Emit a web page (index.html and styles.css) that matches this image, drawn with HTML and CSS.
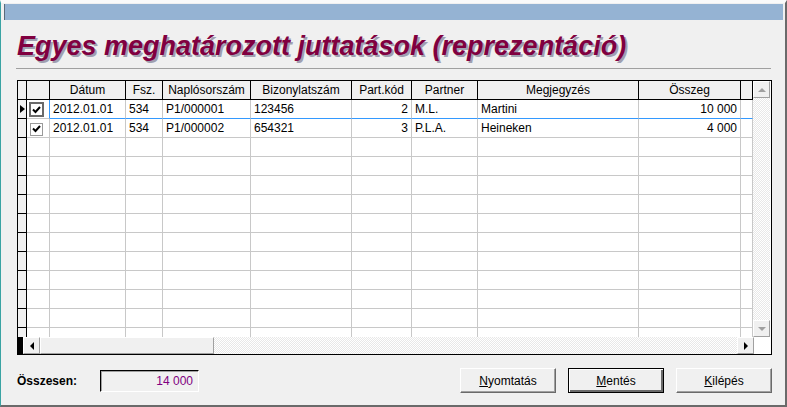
FILE: index.html
```html
<!DOCTYPE html>
<html>
<head>
  <title>Egyes meghatározott juttatások</title>
  <link rel="stylesheet" href="styles.css">
</head>
<body>
  <div class="window">
    <div class="titlebar"></div>
    <h1 class="title">Egyes meghatározott juttatások (reprezentáció)</h1>
    <div class="rule"></div>

    <div class="grid-box">
      <div class="grid-main">
        <div class="grid-view">
          <table class="grid">
            <colgroup>
              <col style="width:9px"><col style="width:23px"><col style="width:76px"><col style="width:37px">
              <col style="width:88px"><col style="width:101px"><col style="width:60px"><col style="width:66px">
              <col style="width:161px"><col style="width:102px"><col style="width:12px">
            </colgroup>
            <thead>
              <tr>
                <th class="ind"></th>
                <th></th>
                <th>Dátum</th>
                <th>Fsz.</th>
                <th>Naplósorszám</th>
                <th>Bizonylatszám</th>
                <th>Part.kód</th>
                <th>Partner</th>
                <th>Megjegyzés</th>
                <th>Összeg</th>
                <th></th>
              </tr>
            </thead>
            <tbody>
              <tr class="current">
                <td class="ind"><span class="arrow"></span></td>
                <td class="chk"><span class="box focus"><svg width="11" height="11" viewBox="0 0 11 11"><path d="M2 5.5 L4.5 8 L9 3" fill="none" stroke="#000" stroke-width="2"/></svg></span></td>
                <td>2012.01.01</td>
                <td>534</td>
                <td>P1/000001</td>
                <td>123456</td>
                <td class="num">2</td>
                <td>M.L.</td>
                <td>Martini</td>
                <td class="num">10 000</td>
                <td></td>
              </tr>
              <tr>
                <td class="ind"></td>
                <td class="chk"><span class="box"><svg width="11" height="11" viewBox="0 0 11 11"><path d="M2 5.5 L4.5 8 L9 3" fill="none" stroke="#000" stroke-width="2"/></svg></span></td>
                <td>2012.01.01</td>
                <td>534</td>
                <td>P1/000002</td>
                <td>654321</td>
                <td class="num">3</td>
                <td>P.L.A.</td>
                <td>Heineken</td>
                <td class="num">4 000</td>
                <td></td>
              </tr>
              <tr><td class="ind"></td><td></td><td></td><td></td><td></td><td></td><td></td><td></td><td></td><td></td><td></td></tr>
              <tr><td class="ind"></td><td></td><td></td><td></td><td></td><td></td><td></td><td></td><td></td><td></td><td></td></tr>
              <tr><td class="ind"></td><td></td><td></td><td></td><td></td><td></td><td></td><td></td><td></td><td></td><td></td></tr>
              <tr><td class="ind"></td><td></td><td></td><td></td><td></td><td></td><td></td><td></td><td></td><td></td><td></td></tr>
              <tr><td class="ind"></td><td></td><td></td><td></td><td></td><td></td><td></td><td></td><td></td><td></td><td></td></tr>
              <tr><td class="ind"></td><td></td><td></td><td></td><td></td><td></td><td></td><td></td><td></td><td></td><td></td></tr>
              <tr><td class="ind"></td><td></td><td></td><td></td><td></td><td></td><td></td><td></td><td></td><td></td><td></td></tr>
              <tr><td class="ind"></td><td></td><td></td><td></td><td></td><td></td><td></td><td></td><td></td><td></td><td></td></tr>
              <tr><td class="ind"></td><td></td><td></td><td></td><td></td><td></td><td></td><td></td><td></td><td></td><td></td></tr>
              <tr><td class="ind"></td><td></td><td></td><td></td><td></td><td></td><td></td><td></td><td></td><td></td><td></td></tr>
              <tr><td class="ind"></td><td></td><td></td><td></td><td></td><td></td><td></td><td></td><td></td><td></td><td></td></tr>
              <tr><td class="ind"></td><td></td><td></td><td></td><td></td><td></td><td></td><td></td><td></td><td></td><td></td></tr>
            </tbody>
          </table>
        </div>
        <div class="vscroll">
          <div class="sbtn"><span class="tri up"></span></div>
          <div class="track"></div>
          <div class="sbtn"><span class="tri down"></span></div>
        </div>
      </div>
      <div class="hscroll">
        <div class="hstub"></div>
        <div class="sbtn"><span class="tri left"></span></div>
        <div class="thumb"></div>
        <div class="track"></div>
        <div class="sbtn"><span class="tri right"></span></div>
        <div class="corner"></div>
      </div>
    </div>

    <div class="footer">
      <span class="total-label">Összesen:</span>
      <div class="total-box">14 000</div>
      <div class="buttons">
        <button class="btn"><u>N</u>yomtatás</button>
        <button class="btn default"><u>M</u>entés</button>
        <button class="btn"><u>K</u>ilépés</button>
      </div>
    </div>
  </div>
</body>
</html>
```

FILE: styles.css
```css
html, body {
  margin: 0;
  padding: 0;
}
body {
  width: 787px;
  height: 407px;
  overflow: hidden;
  background: #f0f0f0;
  font-family: "Liberation Sans", Arial, sans-serif;
  font-size: 12px;
  color: #000;
}
.window {
  box-sizing: border-box;
  height: 407px;
  border-left: 1px solid #3aa3a3;
  border-right: 2px solid #6a6a6a;
  border-bottom: 2px solid #6a6a6a;
  border-top: 3px solid #fafafa;
  padding-top: 1px;
}
.titlebar {
  height: 16px;
  margin: 0 2px 0 3px;
  background: #95b3d3;
  border-left: 1px solid #5a6a7a;
}
.title {
  margin: 11px 0 0 16px;
  font-size: 27px;
  line-height: 30px;
  font-weight: bold;
  font-style: italic;
  color: #800040;
  text-shadow: 2px 2px 0 #a0a0b0;
  white-space: nowrap;
}
.rule {
  height: 1px;
  margin: 7px 14px 0 15px;
  background: #a0a0a0;
}

/* grid */
.grid-box {
  margin: 11px 0 0 16px;
  width: 753px;
  border: 1px solid #000;
  background: #fff;
}
.grid-main {
  display: flex;
  height: 256px;
}
.grid-view {
  width: 735px;
  overflow: hidden;
}
.grid {
  table-layout: fixed;
  width: 735px;
  border-collapse: separate;
  border-spacing: 0;
}
.grid th, .grid td {
  box-sizing: border-box;
  padding: 0 3px;
  line-height: 18px;
  height: 19px;
  white-space: nowrap;
  overflow: hidden;
}
.grid th {
  background: #f0f0f0;
  font-weight: normal;
  text-align: center;
  border-right: 1px solid #000;
  border-bottom: 1px solid #000;
}
.grid td {
  border-right: 1px solid #c8c8c8;
  border-bottom: 1px solid #c8c8c8;
  text-align: left;
}
.grid td.num {
  text-align: right;
}
.grid .ind {
  padding: 0;
  background: #f0f0f0;
  border-right: 1px solid #000;
  border-bottom: 1px solid #000;
  position: relative;
}
.grid td.chk {
  padding: 0;
}
.grid tr.current td {
  border-bottom-color: #3399ff;
}
.grid tr.current td.ind {
  border-bottom-color: #000;
}
.grid tr.current td.chk {
  border-bottom-color: #c8c8c8;
  border-right-color: #3399ff;
}
.arrow {
  position: absolute;
  left: 2px;
  top: 5px;
  border-left: 5px solid #000;
  border-top: 4px solid transparent;
  border-bottom: 4px solid transparent;
}
.box {
  display: block;
  box-sizing: border-box;
  width: 13px;
  height: 13px;
  margin: 2px 0 0 3px;
  border: 1px solid #9a9a9a;
  background: #fff;
}
.box svg {
  display: block;
  margin: -1px 0 0 0;
}
.box.focus {
  width: 15px;
  height: 15px;
  margin: 1px 0 0 2px;
  border: 2px solid #6a6a6a;
}
.box.focus svg {
  margin: 0;
}

/* scrollbars */
.track {
  flex: 1;
  background: repeating-conic-gradient(#ffffff 0 25%, #e8e8e8 0 50%) 0 0 / 2px 2px;
}
.sbtn {
  box-sizing: border-box;
  width: 17px;
  height: 17px;
  background: #f0f0f0;
  border-top: 1px solid #fff;
  border-left: 1px solid #fff;
  border-right: 1px solid #a0a0a0;
  border-bottom: 1px solid #a0a0a0;
  display: flex;
  align-items: center;
  justify-content: center;
}
.vscroll {
  width: 17px;
  display: flex;
  flex-direction: column;
}
.tri {
  width: 0;
  height: 0;
}
.tri.up {
  border-bottom: 4px solid #a0a0a0;
  border-left: 4px solid transparent;
  border-right: 4px solid transparent;
}
.tri.down {
  border-top: 4px solid #a0a0a0;
  border-left: 4px solid transparent;
  border-right: 4px solid transparent;
}
.tri.left {
  border-right: 4px solid #000;
  border-top: 4px solid transparent;
  border-bottom: 4px solid transparent;
}
.tri.right {
  border-left: 4px solid #000;
  border-top: 4px solid transparent;
  border-bottom: 4px solid transparent;
}
.hscroll {
  display: flex;
  height: 17px;
}
.hstub {
  width: 5px;
  background: #000;
}
.hscroll .sbtn {
  width: 17px;
}
.hscroll .sbtn:last-of-type {
  width: 16px;
}
.thumb {
  box-sizing: border-box;
  width: 174px;
  background: #f0f0f0;
  border-top: 1px solid #fff;
  border-left: 1px solid #fff;
  border-right: 1px solid #a0a0a0;
  border-bottom: 1px solid #a0a0a0;
}
.corner {
  width: 17px;
  background: #fff;
}

/* footer */
.footer {
  display: flex;
  align-items: center;
  margin-top: 13px;
  padding-left: 16px;
  height: 25px;
}
.total-label {
  width: 83px;
  font-weight: bold;
}
.total-box {
  box-sizing: border-box;
  width: 99px;
  height: 22px;
  line-height: 20px;
  padding-right: 5px;
  text-align: right;
  color: #800080;
  border-top: 1px solid #000;
  border-left: 1px solid #000;
  border-right: 1px solid #fff;
  border-bottom: 1px solid #fff;
  box-shadow: inset 1px 1px 0 #a0a0a0;
}
.buttons {
  margin-left: auto;
  margin-right: 13px;
  display: flex;
  gap: 12px;
}
.btn {
  box-sizing: border-box;
  width: 96px;
  height: 25px;
  padding: 0;
  font-family: "Liberation Sans", Arial, sans-serif;
  font-size: 12px;
  color: #000;
  background: #f0f0f0;
  border: 1px solid;
  border-color: #fff #6a6a6a #6a6a6a #fff;
  box-shadow: inset -1px -1px 0 #a0a0a0;
}
.btn.default {
  border: 1px solid #000;
  box-shadow: inset 1px 1px 0 #fff, inset -2px -2px 0 #6a6a6a;
}
```
